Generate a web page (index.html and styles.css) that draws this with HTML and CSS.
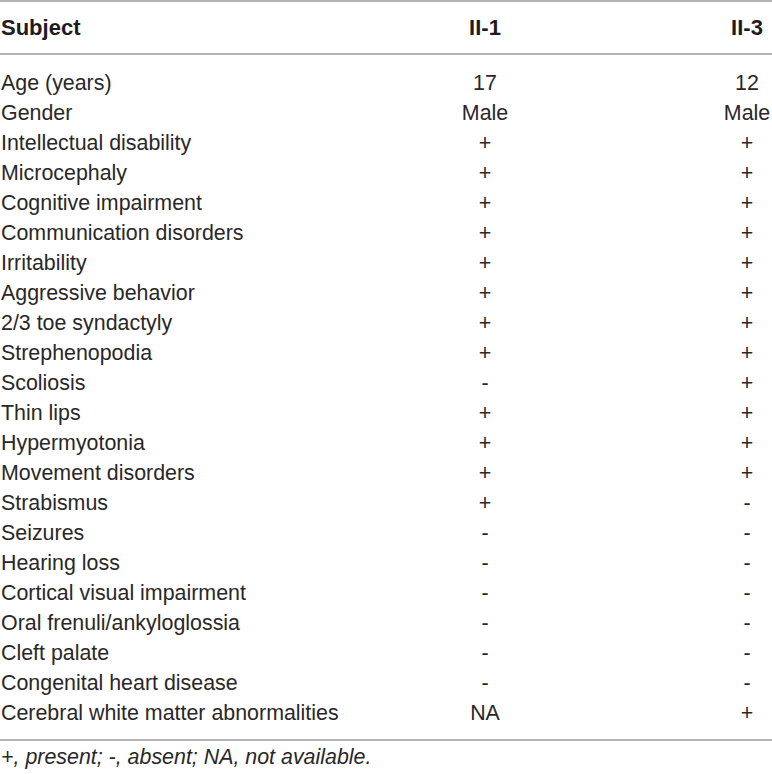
FILE: index.html
```html
<!DOCTYPE html>
<html lang="en">
<head>
<meta charset="utf-8">
<title>Clinical features</title>
<link rel="stylesheet" href="styles.css">
</head>
<body>
<div class="table">
  <div class="row head"><span>Subject</span><span>II-1</span><span>II-3</span></div>
  <div class="body">
    <div class="row"><span>Age (years)</span><span>17</span><span>12</span></div>
    <div class="row"><span>Gender</span><span>Male</span><span>Male</span></div>
    <div class="row"><span>Intellectual disability</span><span>+</span><span>+</span></div>
    <div class="row"><span>Microcephaly</span><span>+</span><span>+</span></div>
    <div class="row"><span>Cognitive impairment</span><span>+</span><span>+</span></div>
    <div class="row"><span>Communication disorders</span><span>+</span><span>+</span></div>
    <div class="row"><span>Irritability</span><span>+</span><span>+</span></div>
    <div class="row"><span>Aggressive behavior</span><span>+</span><span>+</span></div>
    <div class="row"><span>2/3 toe syndactyly</span><span>+</span><span>+</span></div>
    <div class="row"><span>Strephenopodia</span><span>+</span><span>+</span></div>
    <div class="row"><span>Scoliosis</span><span>-</span><span>+</span></div>
    <div class="row"><span>Thin lips</span><span>+</span><span>+</span></div>
    <div class="row"><span>Hypermyotonia</span><span>+</span><span>+</span></div>
    <div class="row"><span>Movement disorders</span><span>+</span><span>+</span></div>
    <div class="row"><span>Strabismus</span><span>+</span><span>-</span></div>
    <div class="row"><span>Seizures</span><span>-</span><span>-</span></div>
    <div class="row"><span>Hearing loss</span><span>-</span><span>-</span></div>
    <div class="row"><span>Cortical visual impairment</span><span>-</span><span>-</span></div>
    <div class="row"><span>Oral frenuli/ankyloglossia</span><span>-</span><span>-</span></div>
    <div class="row"><span>Cleft palate</span><span>-</span><span>-</span></div>
    <div class="row"><span>Congenital heart disease</span><span>-</span><span>-</span></div>
    <div class="row"><span>Cerebral white matter abnormalities</span><span>NA</span><span>+</span></div>
  </div>
</div>
<p class="note">+, present; -, absent; NA, not available.</p>
</body>
</html>
```
FILE: styles.css
```css
html, body {
  margin: 0;
  padding: 0;
  background: #ffffff;
}
body {
  font-family: "Liberation Sans", Arial, Helvetica, sans-serif;
  color: #2a2728;
  font-size: 21.4px;
  width: 772px;
  overflow: hidden;
}
.table {
  border-top: 2px solid #b4b4b4;
  border-bottom: 2px solid #b4b4b4;
}
.row {
  display: grid;
  grid-template-columns: 435px 100px 1fr;
}
.row > span:first-child {
  padding-left: 1px;
  white-space: nowrap;
}
.row > span:nth-child(2) {
  text-align: center;
}
.row > span:nth-child(3) {
  text-align: center;
  padding-left: 187px;
}
.head {
  height: 51px;
  align-items: center;
  border-bottom: 2px solid #b4b4b4;
  font-weight: bold;
  font-size: 22px;
  color: #1e1b1c;
}
.body {
  padding: 13px 0 11px;
}
.body .row {
  height: 30px;
  line-height: 30px;
}
.note {
  margin: 0;
  font-style: italic;
  line-height: 32px;
  padding-left: 1px;
}
```
